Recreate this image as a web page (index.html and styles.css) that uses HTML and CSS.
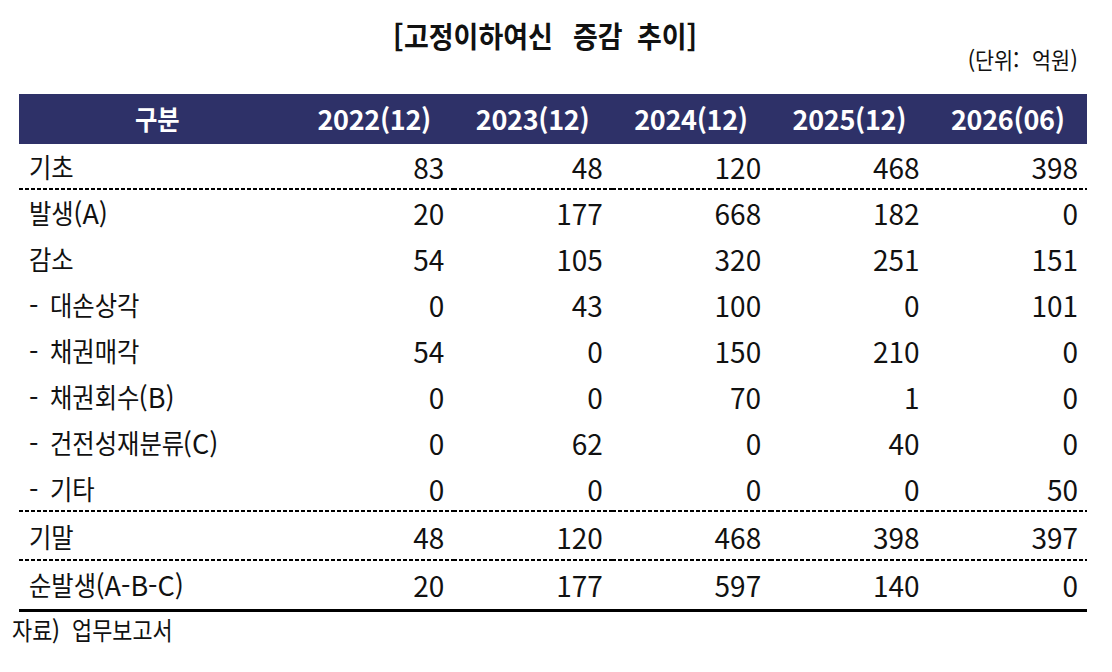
FILE: index.html
```html
<!DOCTYPE html>
<html lang="ko">
<head>
<meta charset="utf-8">
<title>고정이하여신 증감 추이</title>
<link rel="stylesheet" href="styles.css">
</head>
<body>
<div class="page">
  <h1 class="title">[<span class="hg n6">고정이하여신</span><span class="hg n2 w1">증감</span><span class="hg n2 w2">추이</span>]</h1>
  <div class="unit">(<span class="hg n2">단위</span>:<span class="hg n2 w3">억원</span>)</div>
  <table class="grid">
    <colgroup>
      <col class="c-label">
      <col><col><col><col><col>
    </colgroup>
    <thead>
      <tr>
        <th><span class="hg n2">구분</span></th>
        <th>2022(12)</th>
        <th>2023(12)</th>
        <th>2024(12)</th>
        <th>2025(12)</th>
        <th>2026(06)</th>
      </tr>
    </thead>
    <tbody>
      <tr class="dot">
        <td class="label"><span class="hg n2">기초</span></td>
        <td>83</td><td>48</td><td>120</td><td>468</td><td>398</td>
      </tr>
      <tr>
        <td class="label"><span class="hg n2">발생</span>(A)</td>
        <td>20</td><td>177</td><td>668</td><td>182</td><td>0</td>
      </tr>
      <tr>
        <td class="label"><span class="hg n2">감소</span></td>
        <td>54</td><td>105</td><td>320</td><td>251</td><td>151</td>
      </tr>
      <tr>
        <td class="label"><span class="dash">-</span><span class="hg n4">대손상각</span></td>
        <td>0</td><td>43</td><td>100</td><td>0</td><td>101</td>
      </tr>
      <tr>
        <td class="label"><span class="dash">-</span><span class="hg n4">채권매각</span></td>
        <td>54</td><td>0</td><td>150</td><td>210</td><td>0</td>
      </tr>
      <tr>
        <td class="label"><span class="dash">-</span><span class="hg n4">채권회수</span>(B)</td>
        <td>0</td><td>0</td><td>70</td><td>1</td><td>0</td>
      </tr>
      <tr>
        <td class="label"><span class="dash">-</span><span class="hg n6">건전성재분류</span>(C)</td>
        <td>0</td><td>62</td><td>0</td><td>40</td><td>0</td>
      </tr>
      <tr class="dot">
        <td class="label"><span class="dash">-</span><span class="hg n2">기타</span></td>
        <td>0</td><td>0</td><td>0</td><td>0</td><td>50</td>
      </tr>
      <tr class="dot tall">
        <td class="label"><span class="hg n2">기말</span></td>
        <td>48</td><td>120</td><td>468</td><td>398</td><td>397</td>
      </tr>
      <tr class="last">
        <td class="label"><span class="hg n3">순발생</span>(A-B-C)</td>
        <td>20</td><td>177</td><td>597</td><td>140</td><td>0</td>
      </tr>
    </tbody>
  </table>
  <div class="source"><span class="hg n2">자료</span>)<span class="hg n5 w4">업무보고서</span></div>
</div>
</body>
</html>
```

FILE: styles.css
```css
html, body {
  margin: 0;
  padding: 0;
  background: #ffffff;
}

body {
  font-family: "Noto Sans CJK KR", "Noto Sans", sans-serif;
  color: #111111;
}

.page {
  width: 1068px;
  padding: 0 0 0 19px;
}

/* Hangul runs are drawn a little narrower than Latin text, as in the source */
.hg {
  display: inline-block;
  white-space: nowrap;
  letter-spacing: 0;
  transform: scaleX(var(--s));
  transform-origin: 0 50%;
}

.n2 { margin-right: calc((var(--s) - 1) * 2em); }
.n3 { margin-right: calc((var(--s) - 1) * 3em); }
.n4 { margin-right: calc((var(--s) - 1) * 4em); }
.n5 { margin-right: calc((var(--s) - 1) * 5em); }
.n6 { margin-right: calc((var(--s) - 1) * 6em); }

.title {
  --s: 0.93;
  margin: 0;
  padding: 15px 16px 0 0;
  height: 40px;
  line-height: 40px;
  font-size: 29px;
  font-weight: 700;
  text-align: center;
  color: #111111;
}

.w1 { margin-left: 21px; }
.w2 { margin-left: 15px; }

.unit {
  --s: 0.9;
  margin-top: -9px;
  height: 48px;
  line-height: 26px;
  font-size: 23px;
  text-align: right;
  padding-right: 9px;
}

.w3 { margin-left: 13px; }

.grid {
  width: 1068px;
  border-collapse: collapse;
  table-layout: fixed;
}

.c-label {
  width: 276px;
}

.grid th {
  --s: 0.9;
  height: 50px;
  padding: 0;
  background: #2e3168;
  color: #ffffff;
  font-size: 27px;
  font-weight: 700;
  text-align: center;
  letter-spacing: -0.3px;
  line-height: 30px;
}

.grid td {
  height: 46px;
  padding: 0 9px 0 0;
  font-size: 28px;
  text-align: right;
  line-height: 32px;
}

.grid td.label {
  --s: 0.9;
  text-align: left;
  padding-left: 10px;
  font-size: 27px;
  white-space: nowrap;
}

.dash {
  display: inline-block;
  width: 21px;
}

.grid tr.tall td {
  height: 49px;
}

.grid tr.last td {
  height: 48px;
  border-bottom: 3px solid #000000;
}

.grid tr.dot td {
  background-image: repeating-linear-gradient(90deg, #000000 0 4px, transparent 4px 6px);
  background-size: 100% 2px;
  background-position: left bottom;
  background-repeat: no-repeat;
}

.source {
  --s: 0.875;
  margin-left: -7px;
  padding-top: 1px;
  font-size: 25px;
  line-height: 32px;
}

.w4 { margin-left: 12px; }
```
